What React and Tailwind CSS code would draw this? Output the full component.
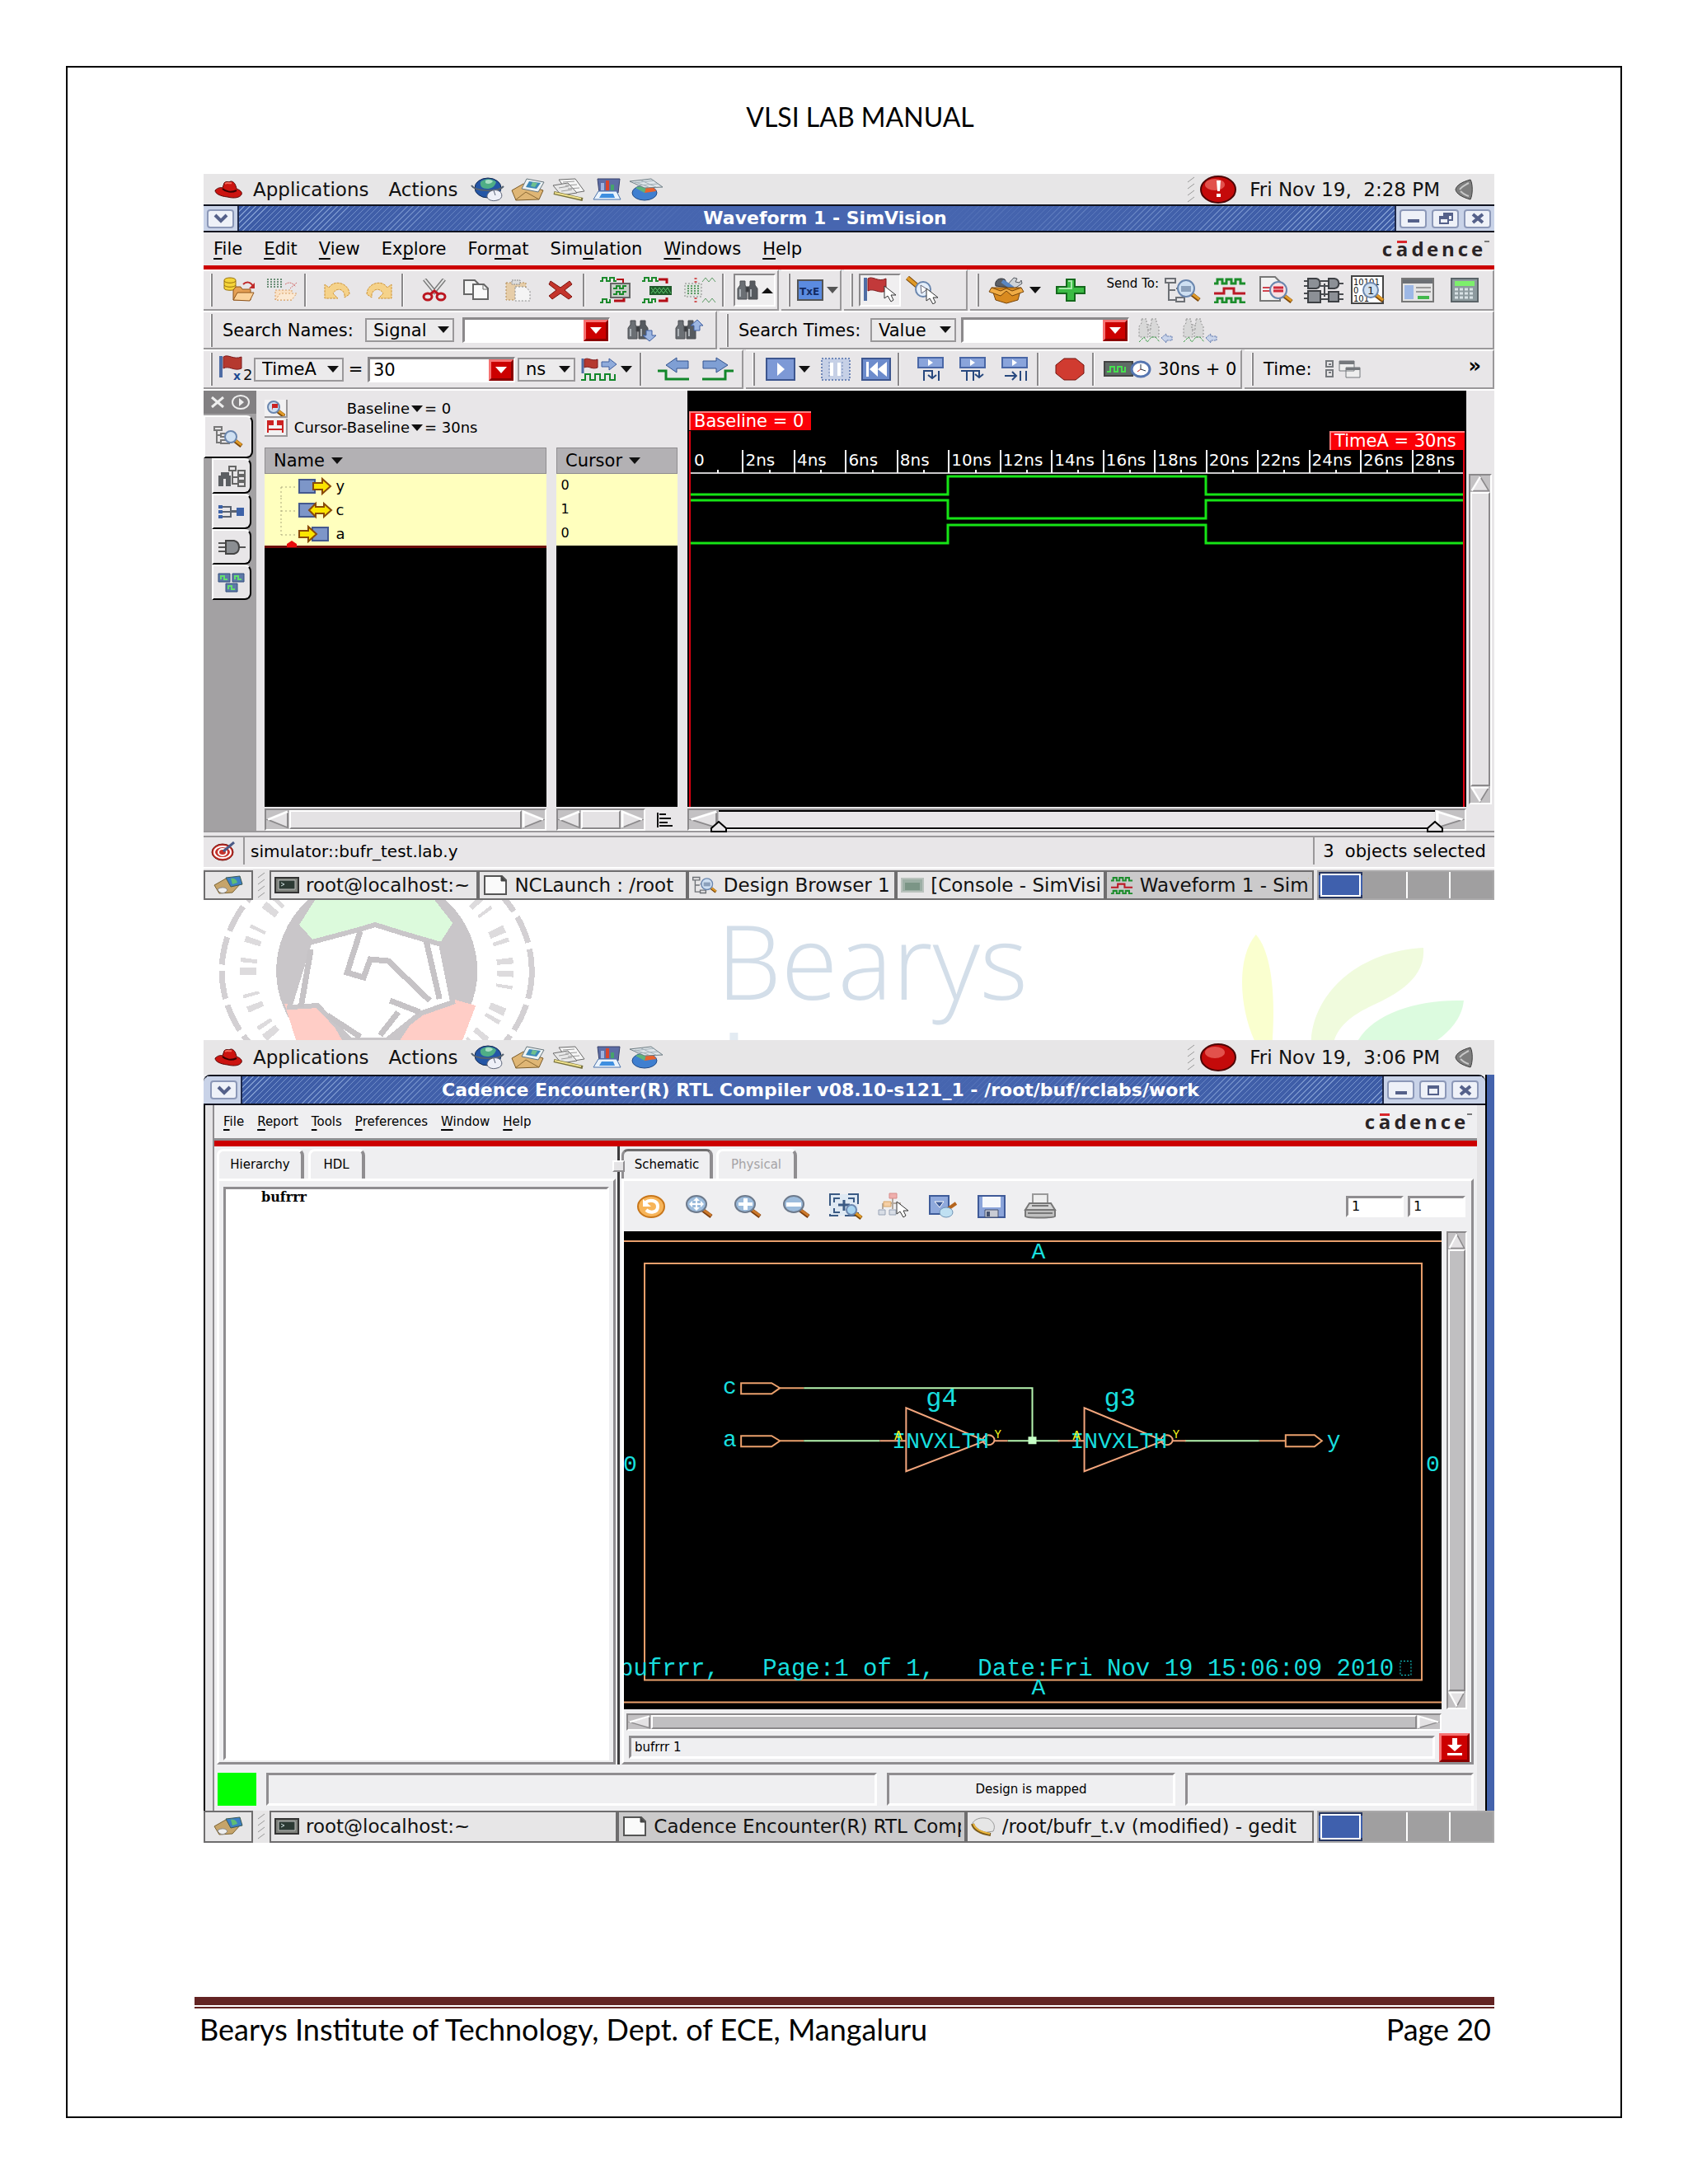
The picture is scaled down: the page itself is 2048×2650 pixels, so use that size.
import { useState } from 'react';

const SANS = "font-['DejaVu_Sans',sans-serif]";
const TITLE_BG =
  'bg-[linear-gradient(90deg,transparent,#4766b0_42%,#4766b0_58%,transparent),repeating-linear-gradient(135deg,#3d5ca6_0px,#3d5ca6_4px,#7f9bd0_4px,#7f9bd0_5px)]';

const MENUS = [
  ['File', 0], ['Edit', 0], ['View', 0], ['Explore', 2], ['Format', 3], ['Simulation', 3], ['Windows', 0], ['Help', 0],
];
const RC_MENUS = [
  ['File', 0], ['Report', 0], ['Tools', 0], ['Preferences', 0], ['Window', 0], ['Help', 0],
];
const TICKS = ['0', '2ns', '4ns', '6ns', '8ns', '10ns', '12ns', '14ns', '16ns', '18ns', '20ns', '22ns', '24ns', '26ns', '28ns'];
const SIGNALS = [
  { name: 'y', value: '0', dir: 'out' },
  { name: 'c', value: '1', dir: 'inout' },
  { name: 'a', value: '0', dir: 'in' },
];

function Icon({ w = 40, h = 32, children }) {
  return (
    <svg width={w} height={h} viewBox={`0 0 ${w} ${h}`} fill="none" className="shrink-0" aria-hidden="true">
      {children}
    </svg>
  );
}

/* ---------- desktop panel icons ---------- */

function HatIcon() {
  return (
    <Icon w={36} h={22}>
      <path d="M2 12c3-3 6-4 9-3l2-6c3-3 5 0 8-2 4 0 6 4 7 9 5 2 7 4 6 7-2 4-9 5-17 3C8 19 2 16 2 12z" fill="#cc1410" stroke="#5a0806" />
      <path d="M11 10c4 4 11 5 17 2" stroke="#3a0202" strokeWidth="2" />
      <path d="M14 4c3-2 5 0 8-1" stroke="#f46a5c" strokeWidth="2" />
    </Icon>
  );
}

function GlobeIcon() {
  return (
    <Icon w={42} h={30}>
      <ellipse cx="21" cy="13" rx="16" ry="12" fill="#2456a6" stroke="#13294f" />
      <path d="M12 6c5-5 14-5 19 0-2 6-6 8-11 8-6 0-9-3-8-8z" fill="#4fae86" />
      <path d="M18 4c3-2 7-1 9 1-2 3-6 4-9 2z" fill="#a9dfc4" />
      <path d="M1 10c4 7 32 9 39 1" stroke="#54616f" strokeWidth="2" />
      <path d="M20 22c2-6 10-8 15-5 5 4 3 10-3 11-6 2-13-1-12-6z" fill="#eef0f8" stroke="#5c6478" />
      <path d="M28 16l2 6" stroke="#5c6478" />
    </Icon>
  );
}

function MailIcon() {
  return (
    <Icon w={42} h={28}>
      <path d="M1 15l14-8 24 8-5 11-28 1z" fill="#dfb675" stroke="#7b5b28" />
      <path d="M19 1l21 4-7 12-20-4z" fill="#eef3f4" stroke="#66757c" />
      <path d="M22 4l14 2-5 7-13-2z" fill="#3b87b8" />
      <path d="M26 5l6 1-3 5-5-1z" fill="#6fc08d" />
      <path d="M5 27l13-10 16 9" stroke="#8a6a35" />
    </Icon>
  );
}

function PapersIcon() {
  return (
    <Icon w={42} h={28}>
      <path d="M9 2l20-1 11 15-19 3z" fill="#f6f6f6" stroke="#6b6b6b" />
      <path d="M2 9l18-3 11 12-19 3z" fill="#e8e8e8" stroke="#6b6b6b" />
      <path d="M14 5l14-1M17 9l14-1M20 13l14-1M9 12l12-2M12 16l13-2" stroke="#9a9a9a" />
      <path d="M3 18l35 8" stroke="#77713c" strokeWidth="4" />
      <path d="M4 18l32 7" stroke="#f0e28e" strokeWidth="2" />
    </Icon>
  );
}

function ChartIcon() {
  return (
    <Icon w={38} h={28}>
      <path d="M7 1h27l-2 17H9z" fill="#5d6da4" stroke="#36406b" />
      <path d="M11 15V6h4v9z" fill="#9fb4e0" />
      <path d="M17 15V3h4v12z" fill="#d8452e" />
      <path d="M23 15V8h4v7z" fill="#46a36c" />
      <path d="M8 16h22l5 10H2z" fill="#eaf3fc" stroke="#4a73ad" />
      <path d="M12 19h14l2 5H9z" fill="#3f8fe0" />
    </Icon>
  );
}

function PieIcon() {
  return (
    <Icon w={42} h={28}>
      <ellipse cx="19" cy="18" rx="15" ry="9" fill="#3f7fd0" stroke="#204a86" />
      <path d="M19 18l14-2c-1-4-6-6-12-6z" fill="#e8632e" />
      <path d="M19 18L8 12c3-2 8-2 13-2z" fill="#5fb37a" />
      <path d="M1 4l26-3 14 10-22 1z" fill="#dfe6ea" stroke="#6c7b82" />
      <path d="M8 5l16 6M15 3l18 8M5 6l26-3M10 9l26-2" stroke="#a2b0b8" />
    </Icon>
  );
}

function SpeakerIcon() {
  return (
    <Icon w={28} h={26}>
      <path d="M3 13c1-5 7-9 18-12 3 5 3 18 0 24C10 22 4 18 3 13z" fill="#7e7e7e" stroke="#3e3e3e" />
      <path d="M8 13c2-3 5-5 11-8M9 15c3 3 6 5 10 6" stroke="#c9c9c9" strokeWidth="2" />
    </Icon>
  );
}

function AlertIcon({ mark }) {
  return (
    <Icon w={44} h={34}>
      <ellipse cx="22" cy="17" rx="21" ry="16" fill="#c40a0a" stroke="#4c0505" strokeWidth="2" />
      <ellipse cx="18" cy="11" rx="12" ry="7" fill="#e2514c" />
      {mark && <path d="M20 6h5l-1 13h-3zM20 22h5v4h-5z" fill="#fff" />}
    </Icon>
  );
}

/* ---------- toolbar icons ---------- */

function Binoculars({ dim }) {
  const c = dim ? '#8e8e8e' : '#4b4d50';
  const dash = dim ? '2 2' : undefined;
  return (
    <g stroke={c} strokeDasharray={dash}>
      <path d="M4 2h6v5l2 4v13H1V11l3-4z" fill={dim ? '#d8d8d8' : '#6b6f74'} />
      <path d="M16 2h6v5l3 4v13H14V11l2-4z" fill={dim ? '#d8d8d8' : '#565a5f'} />
      <path d="M11 9h4v6h-4z" fill={dim ? '#d8d8d8' : '#3b3d40'} />
      {!dim && <path d="M4 12v9M17 12v9" stroke="#aeb3b8" strokeWidth="2" />}
    </g>
  );
}

function Lens({ x, y, r = 9, fill = '#cfe0f2' }) {
  return (
    <g>
      <path d={`M${x + r - 3} ${y + r - 3}l9 7`} stroke="#7a4608" strokeWidth="5" />
      <path d={`M${x + r - 2} ${y + r - 3}l8 6`} stroke="#e09a28" strokeWidth="3" />
      <circle cx={x} cy={y} r={r} fill={fill} stroke="#6a86ae" strokeWidth="2" />
    </g>
  );
}

function Pointer({ x, y }) {
  return <path d={`M${x} ${y}v15l4-3 4 7 3-2-3-6h6z`} fill="#fff" stroke="#333" />;
}

function Caret({ up, color = '#111' }) {
  return (
    <svg width="14" height="8" viewBox="0 0 14 8" className="shrink-0" aria-hidden="true">
      <path d={up ? 'M0 8l7-7 7 7z' : 'M0 0h14L7 8z'} fill={color} />
    </svg>
  );
}

const OpenDbIcon = () => (
  <Icon>
    <path d="M1 4c0-4 14-4 14 0v10c0 3-14 3-14 0z" fill="#f5d53a" stroke="#97700d" />
    <path d="M1 5c2 3 12 3 14 0M1 10c2 3 12 3 14 0" stroke="#97700d" />
    <path d="M12 16l3-4h6l2 3h10v13H12z" fill="#e5a055" stroke="#8f5318" />
    <path d="M12 28l5-9h20l-5 10z" fill="#fbd29a" stroke="#8f5318" />
    <path d="M24 9c4-4 9-3 12 2" stroke="#c02a2a" strokeWidth="2" />
    <path d="M38 7v7h-7z" fill="#c02a2a" />
  </Icon>
);

const ReloadDbIcon = () => (
  <Icon>
    <path d="M2 3h18M2 6h18M2 9h18M2 12h18" stroke="#6c8f78" strokeWidth="2" strokeDasharray="2 2" />
    <path d="M12 16h20v12H12z" fill="#fae1c5" stroke="#d79d62" strokeDasharray="2 2" />
    <path d="M12 28l6-8h20l-6 8z" fill="#fbe9d3" stroke="#d79d62" strokeDasharray="2 2" />
    <path d="M24 9c4-3 8-3 13 3M38 7l-8 7" stroke="#d26a6a" strokeDasharray="2 1" />
  </Icon>
);

const UndoIcon = ({ flip }) => (
  <Icon w={34} h={24}>
    <path
      d={flip ? 'M2 17C2 4 20 -2 27 9l5-4v17H16l6-6c-4-7-12-6-14 1v4z' : 'M32 17C32 4 14 -2 7 9L2 5v17h16l-6-6c4-7 12-6 14 1v4z'}
      fill="#f5d28a"
      stroke="#cf9434"
      strokeDasharray="3 1"
    />
  </Icon>
);

const CutIcon = () => (
  <Icon w={32} h={28}>
    <path d="M4 1l14 17M28 1L14 18" stroke="#777" strokeWidth="5" />
    <path d="M4 1l14 17M28 1L14 18" stroke="#e4e4e4" strokeWidth="2" />
    <ellipse cx="8" cy="22" rx="5" ry="4" stroke="#bb1620" strokeWidth="3" />
    <ellipse cx="24" cy="22" rx="5" ry="4" stroke="#bb1620" strokeWidth="3" />
    <path d="M11 19l5-4 5 4" stroke="#bb1620" strokeWidth="3" />
  </Icon>
);

const CopyIcon = () => (
  <Icon w={32} h={26}>
    <path d="M1 1h13l5 5v12H1z" fill="#f3f3f3" stroke="#666" strokeWidth="2" />
    <path d="M12 6h13l5 5v13H12z" fill="#fafafa" stroke="#666" strokeWidth="2" />
    <path d="M24 6v6h6" stroke="#666" />
  </Icon>
);

const PasteIcon = () => (
  <Icon w={32} h={28}>
    <path d="M1 5h24v21H1z" fill="#e6cda8" stroke="#b18c55" strokeDasharray="2 2" />
    <path d="M8 2h10v5H8z" fill="#ddd" stroke="#888" strokeDasharray="2 1" />
    <path d="M12 10h12l6 5v12H12z" fill="#f4f4f4" stroke="#888" strokeDasharray="2 2" />
  </Icon>
);

const DeleteIcon = () => (
  <Icon w={30} h={24}>
    <path d="M3 1l12 8L26 1l3 4-9 7 9 8-4 3-10-7-10 7-4-4 9-7-9-7z" fill="#c4352c" stroke="#7c120d" />
  </Icon>
);

const PULSE = 'M1 5h3V1h5v4h4V1h5v4h3';

const WaveInIcon = () => (
  <Icon>
    <path d={PULSE} stroke="#1d8a2d" strokeWidth="2" />
    <path d="M21 3h8v4" stroke="#b40d16" strokeWidth="2" />
    <path d="M14 8h23v17H14z" fill="#c9cfc9" stroke="#666" strokeWidth="2" />
    <path d="M17 14h4v-3h4v3h4v-3h4M17 21h4v-3h4v3h4v-3h4" stroke="#1d8a2d" strokeWidth="2" />
    <path d="M1 31h3v-4h5v4h4v-4" stroke="#1d8a2d" strokeWidth="2" />
    <path d="M18 29h12v-3" stroke="#b40d16" strokeWidth="3" />
  </Icon>
);

const BusInIcon = () => (
  <Icon>
    <path d={PULSE} stroke="#1d8a2d" strokeWidth="2" />
    <path d="M21 3h10v5" stroke="#b40d16" strokeWidth="3" />
    <path d="M10 11h27v11H10z" fill="#1f5a2a" />
    <path d="M12 13l5 7 5-7 5 7 5-7 4 7M12 20l5-7 5 7 5-7 5 7" stroke="#5ec46e" />
    <path d="M1 31h3v-4h5v4h4v-4h4v4" stroke="#1d8a2d" strokeWidth="2" />
    <path d="M21 29h10v-4" stroke="#b40d16" strokeWidth="3" />
  </Icon>
);

const WaveDimIcon = () => (
  <Icon>
    <path d="M2 8h20v16H2z" fill="#e0e4e0" stroke="#888" strokeDasharray="2 2" />
    <path d="M5 11h14M5 14h14M5 17h14M5 20h14" stroke="#5d9c66" strokeWidth="2" strokeDasharray="2 2" />
    <path d="M15 1v6M15 25v6" stroke="#cf5656" strokeWidth="3" strokeDasharray="2 2" />
    <path d="M23 6l4-5 4 5 4-5 4 5M23 31l4-5 4 5 4-5 4 5" stroke="#5d9c66" />
  </Icon>
);

const FlagCursorIcon = () => (
  <Icon w={42} h={36}>
    <path d="M3 3v28" stroke="#4f6da5" strokeWidth="4" />
    <path d="M6 4c6-4 12 5 22 0v15c-9 4-15-4-22 0z" fill="#c2393a" stroke="#7d1a1c" />
    <Pointer x={26} y={13} />
  </Icon>
);

const HandLensIcon = () => (
  <Icon w={40} h={34}>
    <path d="M2 2l13 11" stroke="#7a4608" strokeWidth="6" />
    <path d="M2 2l12 10" stroke="#e09a28" strokeWidth="4" />
    <circle cx="21" cy="16" r="9" fill="#e4eefa" stroke="#6a86ae" strokeWidth="2" />
    <path d="M18 11l8 5-7 5z" fill="#fff" stroke="#667" />
    <Pointer x={25} y={15} />
  </Icon>
);

const ToolboxIcon = () => (
  <Icon w={46} h={34}>
    <path d="M9 12C7 5 14 1 20 4l6 10z" fill="#5b5f66" stroke="#2f3238" />
    <path d="M22 12l9-10 4 1-2 4 5 1 2-3 1 4-9 6z" fill="#cfd3d8" stroke="#55595f" />
    <path d="M17 6l13 9" stroke="#5a86c2" strokeWidth="5" />
    <path d="M4 14h36l-4 15-14 4-13-4z" fill="#d98a1f" stroke="#77450a" />
    <path d="M4 14l-3 5 14 5 7-6 7 6 14-5-3-5-11 4-7-3-7 3z" fill="#f0ac45" stroke="#77450a" />
  </Icon>
);

const PlusIcon = () => (
  <Icon w={36} h={28}>
    <path d="M13 1h10v9h12v8H23v9H13v-9H1v-8h12z" fill="#3cbb45" stroke="#14691c" strokeWidth="2" />
    <path d="M15 3h4v9H4" stroke="#a3eaa6" strokeWidth="2" />
  </Icon>
);

const TreeLensIcon = ({ w = 44, h = 32 }) => (
  <svg width={w} height={h} viewBox="0 0 44 32" fill="none" className="shrink-0" aria-hidden="true">
    <path d="M1 2h12v5H1zM14 14h8M5 7v21h9M5 16h8M14 25h10v5H14z" stroke="#6d7075" strokeWidth="2" />
    <Lens x={26} y={14} r={10} />
    <path d="M20 11h12v7H20z" fill="#8ba0bb" />
  </svg>
);

const WavesIcon = ({ w = 40, h = 32 }) => (
  <svg width={w} height={h} viewBox="0 0 40 32" fill="none" className="shrink-0" aria-hidden="true">
    <path d="M1 8h4V3h6v5h5V3h6v5h5V3h6v5h6M1 31h4v-5h6v5h5v-5h6v5h5v-5h6v5h6" stroke="#1c8d2c" strokeWidth="3" />
    <path d="M1 20h12v-6h12v6h14" stroke="#bb1a26" strokeWidth="3" />
  </svg>
);

const DocLensIcon = () => (
  <Icon w={44} h={34}>
    <path d="M2 1h18l6 6v23H2z" fill="#f2f2f2" stroke="#777" strokeWidth="2" />
    <path d="M5 14h10M5 18h10" stroke="#d04550" strokeWidth="2" />
    <Lens x={24} y={17} r={10} fill="#f6dfe3" />
    <path d="M18 14h12M18 18h12" stroke="#cf2737" strokeWidth="3" />
  </Icon>
);

const SchemIcon = () => (
  <Icon w={48} h={34}>
    <path d="M0 6h5M0 12h5M20 6h10M20 12h10M42 9h6M0 21h5M0 27h5M20 22h10M20 28h10M42 22h6M42 28h6M25 9v16" stroke="#4a4d51" strokeWidth="2" />
    <path d="M5 3h10c6 1 6 11 0 12H5zM30 3h7c7 1 7 11 0 12h-7zM5 18h15v14H5zM30 19h12v12H30z" fill="#8c9096" stroke="#3d4044" strokeWidth="2" />
  </Icon>
);

const BitsIcon = () => (
  <Icon w={48} h={36}>
    <path d="M1 1h38v33H1z" fill="#fff" stroke="#444" strokeWidth="2" />
    <text x="3" y="12" fontSize="10" fill="#111">10101</text>
    <text x="3" y="22" fontSize="10" fill="#111">0</text>
    <text x="3" y="32" fontSize="10" fill="#111">101</text>
    <Lens x={24} y={18} r={9} />
    <text x="20" y="23" fontSize="13" fill="#222">1</text>
  </Icon>
);

const FormIcon = () => (
  <Icon w={40} h={30}>
    <path d="M1 1h38v28H1z" fill="#e4e4e4" stroke="#777" strokeWidth="2" />
    <path d="M2 2h36v5H2z" fill="#6c7075" />
    <path d="M4 9h11v17H4z" fill="#9db8e6" />
    <path d="M18 12h18M18 17h18" stroke="#999" strokeWidth="2" />
    <path d="M20 24h14" stroke="#42b84c" strokeWidth="4" />
  </Icon>
);

const CalcIcon = () => (
  <Icon w={34} h={30}>
    <path d="M1 1h32v28H1z" fill="#8d9a9e" stroke="#5b6468" strokeWidth="2" />
    <path d="M5 4h24v6H5z" fill="#7df06c" />
    <path d="M5 14h24M5 19h24M5 24h24" stroke="#d9e2e5" strokeWidth="3" strokeDasharray="4 2" />
  </Icon>
);

const FindIcon = ({ dir }) => (
  <Icon w={36} h={28}>
    <Binoculars />
    {dir === 'down' ? (
      <path d="M23 14h7v6h5l-8 7-8-7h4z" fill="#9db6e2" stroke="#3f5fa0" />
    ) : (
      <path d="M23 14h7V8h4l-7-7-8 7h4z" fill="#9db6e2" stroke="#3f5fa0" />
    )}
  </Icon>
);

const FindEdgeIcon = () => (
  <Icon w={44} h={32}>
    <Binoculars dim />
    <path d="M1 30l6-6 4 6 5-6h5l5 6" stroke="#3f9f4a" strokeDasharray="3 1" />
    <path d="M28 25l6-5v3h7v5h-7v3z" fill="#c9d4ea" stroke="#5b75ab" strokeDasharray="2 1" />
  </Icon>
);

const FlagX2Icon = () => (
  <Icon w={44} h={36}>
    <path d="M3 2v26" stroke="#4f6da5" strokeWidth="4" />
    <path d="M6 3c6-4 12 4 22 0v14c-9 4-15-4-22 0z" fill="#b5392f" stroke="#7d1a1c" />
    <text x="18" y="31" fontSize="14" fontWeight="bold" fill="#1d4a92">x</text>
    <text x="30" y="31" fontSize="18" fill="#111">2</text>
  </Icon>
);

const FlagRunIcon = () => (
  <Icon w={44} h={30}>
    <path d="M2 2v18" stroke="#4f6da5" strokeWidth="3" />
    <path d="M4 3c5-3 9 3 16 0v10c-7 3-11-3-16 0z" fill="#b5392f" stroke="#7d1a1c" />
    <path d="M25 6h9V2l9 7-9 7v-4h-9z" fill="#8fabdb" stroke="#3f5fa0" />
    <path d="M0 28h5v-7h6v7h6v-7h6v7h6v-7h6v7h6v-7" stroke="#12862a" strokeWidth="2" />
  </Icon>
);

const EdgeIcon = ({ flip }) => (
  <Icon w={40} h={30}>
    <path d={flip ? 'M2 5h16V1l14 9-14 9v-5H2z' : 'M38 5H24V1L11 10l13 9v-5h14z'} fill="#7f9fd4" stroke="#35558f" />
    <path d={flip ? 'M1 27h28V17h10' : 'M1 17h10v10h28'} stroke="#12862a" strokeWidth="3" />
  </Icon>
);

const PlayIcon = () => (
  <Icon w={36} h={28}>
    <path d="M1 1h34v26H1z" fill="#7d99d6" stroke="#3d568f" strokeWidth="2" />
    <path d="M14 6l9 8-9 8z" fill="#fff" />
  </Icon>
);

const PauseIcon = () => (
  <Icon w={36} h={28}>
    <path d="M1 1h34v26H1z" fill="#c6d0e6" stroke="#6f87b8" strokeWidth="2" strokeDasharray="2 2" />
    <path d="M13 6v16M22 6v16" stroke="#fff" strokeWidth="4" />
    <path d="M10 5v18M26 5v18" stroke="#6f87b8" strokeDasharray="2 2" />
  </Icon>
);

const RewindIcon = () => (
  <Icon w={36} h={28}>
    <path d="M1 1h34v26H1z" fill="#6d8ccc" stroke="#3d568f" strokeWidth="2" />
    <path d="M6 5h3v18H6zM20 5v18l-10-9zM31 5v18l-11-9z" fill="#fff" />
  </Icon>
);

const StepIcon = ({ kind }) => (
  <Icon w={32} h={30}>
    <path d="M1 1h30v12H1z" fill="#8aa4db" stroke="#4a67a6" strokeWidth="2" />
    <path d="M13 3l6 4-6 4z" fill="#fff" />
    {kind === 0 && <path d="M8 29V17h10v8M26 17v12M13 22l5 4 5-4" stroke="#27487e" strokeWidth="2" />}
    {kind === 1 && <path d="M2 17h22v8M9 17v12M17 17v12M19 21l5 4 5-4" stroke="#27487e" strokeWidth="2" />}
    {kind === 2 && <path d="M4 23h14M13 18l5 5-5 5M23 17v12M30 17v12" stroke="#27487e" strokeWidth="2" />}
  </Icon>
);

const StopIcon = () => (
  <Icon w={36} h={28}>
    <path d="M11 1h14l10 8v10l-10 8H11L1 19V9z" fill="#d03b30" stroke="#74150f" />
  </Icon>
);

const SimClockIcon = () => (
  <Icon w={58} h={22}>
    <path d="M1 2h34v17H1z" fill="#5f6a66" stroke="#444" strokeWidth="2" />
    <path d="M4 14h4V8h5v6h4V8h5v6h4V8" stroke="#46e04e" strokeWidth="2" />
    <ellipse cx="45" cy="11" rx="11" ry="9" fill="#fff" stroke="#5575b0" strokeWidth="3" />
    <path d="M45 5v6l6 2" stroke="#234" />
    <path d="M45 11l-4 3" stroke="#c22" />
  </Icon>
);

const LinkWinIcon = () => (
  <Icon w={44} h={22}>
    <path d="M2 1h8v7H2zM2 12h8v8H2zM5 5h3M5 15h3" stroke="#75787c" strokeWidth="2" />
    <path d="M18 1h18v12H18zM26 9h17v12H26z" fill="#eee" stroke="#75787c" />
    <path d="M18 1h18v4H18zM26 9h17v3H26z" fill="#75787c" />
  </Icon>
);

/* ---------- shared widgets ---------- */

function Slot({ label, className = 'w-[51px]', children }) {
  return (
    <button type="button" aria-label={label} className={`flex h-10 shrink-0 items-center justify-center gap-1 ${className}`}>
      {children}
    </button>
  );
}

function Grip() {
  return (
    <div className="flex h-full w-[18px] shrink-0 items-center justify-center">
      <div className="h-[40px] w-[3px] border-r-2 border-l border-r-[#8b898b] border-l-white" />
    </div>
  );
}

function Sep() {
  return (
    <div className="flex h-full w-4 shrink-0 items-center pl-[2px]">
      <div className="h-[40px] w-[3px] border-l-2 border-r border-l-[#8b898b] border-r-white" />
    </div>
  );
}

function Group({ className = '', children }) {
  return (
    <div className={`flex items-center border-r-2 border-b-2 border-t-2 border-r-[#9a989a] border-b-[#9a989a] border-t-white ${className}`}>
      {children}
    </div>
  );
}

function Drop({ label, value, className }) {
  return (
    <div className={`relative h-[29px] shrink-0 ${className}`}>
      <select
        aria-label={label}
        className="h-full w-full appearance-none border-2 border-[#9a989a] bg-[#ecebec] pl-2 text-[21px] leading-6 text-black"
      >
        <option>{value}</option>
      </select>
      <span className="pointer-events-none absolute top-[10px] right-[6px] flex">
        <Caret />
      </span>
    </div>
  );
}

function Combo({ label, initial = '', className }) {
  const [value, setValue] = useState(initial);
  return (
    <div className={`flex h-[31px] shrink-0 border-t-3 border-l-3 border-r-2 border-b-2 border-t-[#8b898b] border-l-[#8b898b] border-r-white border-b-white bg-white ${className}`}>
      <input
        aria-label={label}
        value={value}
        onChange={(e) => setValue(e.target.value)}
        className="h-full min-w-0 flex-1 bg-white px-1 text-[21px] leading-6"
      />
      <button type="button" aria-label="Show history" className="flex w-[30px] items-center justify-center border-3 border-t-[#f67272] border-l-[#f67272] border-r-[#8a0000] border-b-[#8a0000] bg-[#cc0000]">
        <Caret color="#fff" />
      </button>
    </div>
  );
}

function MenuItem({ text, mark }) {
  return (
    <button type="button">
      {text.slice(0, mark)}
      <span className="underline decoration-2 underline-offset-4">{text[mark]}</span>
      {text.slice(mark + 1)}
    </button>
  );
}

function CadenceLogo() {
  return (
    <svg width="132" height="36" viewBox="0 0 132 36" role="img" aria-label="cadence" className="shrink-0">
      <g fontFamily="Open Sans, sans-serif" fontWeight="700" fontSize="24" fill="#2a2426" textAnchor="middle">
        <text x="8" y="27">c</text>
        <text x="26" y="27">a</text>
        <text x="45" y="27">d</text>
        <text x="63" y="27">e</text>
        <text x="82" y="27">n</text>
        <text x="100" y="27">c</text>
        <text x="117" y="27">e</text>
      </g>
      <path d="M20 8h12v3H20z" fill="#d9262b" />
      <path d="M126 8h6v2h-6z" fill="#777" />
    </svg>
  );
}

function TopPanel({ time, alert, className }) {
  return (
    <div className={`flex items-center bg-[#e7e6e7] pr-[22px] pl-3 text-[23px] leading-7 text-[#111] ${className}`}>
      <HatIcon />
      <button type="button" className="ml-3">Applications</button>
      <button type="button" className="ml-6">Actions</button>
      <div className="ml-[15px] flex items-center gap-[7px]">
        <GlobeIcon />
        <MailIcon />
        <PapersIcon />
        <ChartIcon />
        <PieIcon />
      </div>
      <div className="ml-auto flex items-center">
        <PanelGrip />
        <span className="mr-4 ml-[6px] flex"><AlertIcon mark={alert} /></span>
        <span className="whitespace-pre">{time}</span>
        <span className="ml-4 flex"><SpeakerIcon /></span>
      </div>
    </div>
  );
}

function PanelGrip() {
  return (
    <Icon w={10} h={32}>
      <path d="M1 7l8-6M1 15l8-6M1 23l8-6M1 31l8-6" stroke="#999" />
    </Icon>
  );
}

function WindowButton({ label, children }) {
  return (
    <button type="button" aria-label={label} className="flex h-[23px] w-[33px] items-center justify-center rounded-sm border-2 border-[#8c98b8] bg-[#eef1f8]">
      <svg width="18" height="14" viewBox="0 0 18 14" fill="none" aria-hidden="true">{children}</svg>
    </button>
  );
}

function TitleBar({ title, restore, className }) {
  return (
    <div className={`flex border-y-2 border-[#10131f] ${className}`}>
      <div className="flex w-[43px] items-center justify-center border-r-2 border-[#1f2a4c] bg-[#c9d3e8]">
        <WindowButton label="Window menu">
          <path d="M2 3l7 7 7-7" stroke="#55618a" strokeWidth="4" />
        </WindowButton>
      </div>
      <div className={`flex flex-1 items-center justify-center overflow-hidden pl-5 whitespace-nowrap text-[22px] leading-7 font-bold text-white ${TITLE_BG}`}>
        {title}
      </div>
      <div className="flex w-[121px] items-center justify-center gap-[6px] border-l-2 border-[#1f2a4c] bg-[#c9d3e8]">
        <WindowButton label="Minimize"><path d="M2 8h14v4H2z" fill="#55618a" /></WindowButton>
        <WindowButton label="Maximize">
          {restore ? (
            <path d="M6 1h11v8h-4M2 5h10v8H2zM6 3h11M2 7h10" stroke="#55618a" strokeWidth="2" />
          ) : (
            <path d="M3 2h12v10H3zM3 4h12" stroke="#55618a" strokeWidth="2" />
          )}
        </WindowButton>
        <WindowButton label="Close"><path d="M3 2l12 10M15 2L3 12" stroke="#55618a" strokeWidth="4" /></WindowButton>
      </div>
    </div>
  );
}

function Arrow({ dir }) {
  const shapes = {
    left: 'M26 2v22L2 13z',
    right: 'M2 2v22l24-11z',
    up: 'M2 24h24L14 2z',
    down: 'M2 2h24L14 24z',
  };
  return (
    <svg viewBox="0 0 28 26" className="h-full w-full" preserveAspectRatio="none" aria-hidden="true">
      <path d={shapes[dir]} fill="#e4e2e4" stroke="#8b898b" strokeWidth="2" />
      <path d={dir === 'right' ? 'M2 24V2l24 11' : dir === 'down' ? 'M14 24L2 2h24' : dir === 'up' ? 'M2 24L14 2' : 'M2 13L26 2'} fill="none" stroke="#fff" strokeWidth="3" />
    </svg>
  );
}

function HScroll({ thumb = 'bg-[#e4e2e4]', className = '' }) {
  return (
    <div className={`flex border-2 border-t-[#8b898b] border-l-[#8b898b] border-r-white border-b-white bg-[#c3c1c3] ${className}`}>
      <button type="button" aria-label="Scroll left" className="w-7"><Arrow dir="left" /></button>
      <div className={`flex-1 border-2 border-t-white border-l-white border-r-[#8b898b] border-b-[#8b898b] ${thumb}`} />
      <button type="button" aria-label="Scroll right" className="w-7"><Arrow dir="right" /></button>
    </div>
  );
}

function VScroll({ thumb = 'bg-[#e4e2e4]', className = '' }) {
  return (
    <div className={`flex flex-col border-2 border-t-[#8b898b] border-l-[#8b898b] border-r-white border-b-white bg-[#c3c1c3] ${className}`}>
      <button type="button" aria-label="Scroll up" className="h-5"><Arrow dir="up" /></button>
      <div className={`flex-1 border-2 border-t-white border-l-white border-r-[#8b898b] border-b-[#8b898b] ${thumb}`} />
      <button type="button" aria-label="Scroll down" className="h-5"><Arrow dir="down" /></button>
    </div>
  );
}

/* ---------- taskbar ---------- */

const TerminalIcon = () => (
  <Icon w={30} h={20}>
    <path d="M1 1h28v18H1z" fill="#7d807a" stroke="#333" strokeWidth="2" />
    <path d="M5 4h20v11H5z" fill="#2c3a34" stroke="#bbb" />
    <path d="M8 7l4 2-4 2" stroke="#cdd" />
  </Icon>
);

const PageIcon = () => (
  <Icon w={30} h={24}>
    <path d="M2 1h21l5 5v17H2z" fill="#fafafa" stroke="#555" strokeWidth="2" />
    <path d="M22 1v6h6" fill="#444" stroke="#444" />
  </Icon>
);

const ConsoleIcon = () => (
  <Icon w={28} h={18}>
    <path d="M1 1h26v16H1z" fill="#9dafa5" stroke="#b9c2bd" strokeWidth="2" />
    <path d="M5 6h18v9H5z" fill="#7b9586" />
  </Icon>
);

const PencilIcon = () => (
  <Icon w={30} h={24}>
    <path d="M2 8C6 1 16 1 22 3c6 4 8 9 5 15L14 20C6 18 1 14 2 8z" fill="#e6e6e6" stroke="#999" />
    <path d="M2 9c2 7 8 11 22 13" stroke="#7a5a1c" strokeWidth="4" />
    <path d="M3 9c2 6 8 10 20 12" stroke="#f0b93a" strokeWidth="2" />
  </Icon>
);

const DesktopIcon = () => (
  <Icon w={38} h={24}>
    <path d="M2 12l14-8 18 6-10 11-16 1z" fill="#c6a46a" stroke="#7d6535" />
    <path d="M16 3l17-2 3 10-14 3z" fill="#3b7fc4" stroke="#3d5a50" />
    <path d="M22 4c4-1 7 1 8 5l-6 2z" fill="#5fbd74" />
    <path d="M6 17c4-3 10-3 12 1-3 5-10 5-12-1z" fill="#eee" stroke="#888" />
  </Icon>
);

const TASK_ICONS = {
  terminal: <TerminalIcon />,
  page: <PageIcon />,
  tree: <TreeLensIcon w={30} h={22} />,
  console: <ConsoleIcon />,
  wave: <WavesIcon w={28} h={22} />,
  pencil: <PencilIcon />,
};

function Taskbar({ tasks, className }) {
  return (
    <div className={`flex bg-[#e7e6e7] ${className}`}>
      <button type="button" aria-label="Show desktop" className="flex w-[60px] items-center justify-center border-2 border-[#6e6d6e]">
        <DesktopIcon />
      </button>
      <div className="flex w-[20px] items-center justify-center"><PanelGrip /></div>
      <div className="flex min-w-0 flex-1">
        {tasks.map((task) => (
          <button
            type="button"
            key={task.label}
            className={`flex min-w-0 flex-1 items-center gap-2 overflow-hidden border-2 border-[#6e6d6e] px-1 text-[23px] leading-7 whitespace-nowrap text-[#111] ${
              task.active ? 'bg-[#cbcacb]' : 'bg-[#e7e6e7]'
            }`}
          >
            {TASK_ICONS[task.icon]}
            <span className="overflow-hidden">{task.label}</span>
          </button>
        ))}
      </div>
      <div className="ml-1 grid w-[215px] grid-cols-4 border-2 border-[#a9a8a9] bg-[#a09fa0]">
        <div className="border-y-4 border-[#26355f] bg-[#3f60ad] outline-2 -outline-offset-4 outline-white" />
        <div />
        <div className="border-l-2 border-white" />
        <div className="border-l-2 border-white" />
      </div>
    </div>
  );
}

/* ---------- SimVision window ---------- */

function SimToolbars() {
  return (
    <div className="bg-[#e8e6e8]">
      <div className="flex h-[50px] gap-[3px]">
        <Group className="pr-[2px]">
          <Grip />
          <Slot label="Open database"><OpenDbIcon /></Slot>
          <Slot label="Reload database"><ReloadDbIcon /></Slot>
          <Sep />
          <Slot label="Undo"><UndoIcon /></Slot>
          <Slot label="Redo"><UndoIcon flip /></Slot>
          <Sep />
          <Slot label="Cut"><CutIcon /></Slot>
          <Slot label="Copy"><CopyIcon /></Slot>
          <Slot label="Paste"><PasteIcon /></Slot>
          <Slot label="Delete"><DeleteIcon /></Slot>
          <Sep />
          <Slot label="Add wave"><WaveInIcon /></Slot>
          <Slot label="Add bus"><BusInIcon /></Slot>
          <Slot label="Expand wave"><WaveDimIcon /></Slot>
          <Sep />
          <Slot label="Find" className="w-[51px] border-2 border-t-[#8b898b] border-l-[#8b898b] border-r-white border-b-white bg-[#f0eff0]">
            <Icon w={26} h={26}><Binoculars /></Icon>
            <Caret up />
          </Slot>
        </Group>
        <Group className="pr-[2px]">
          <Grip />
          <Slot label="Text editor">
            <Icon w={32} h={26}>
              <path d="M1 1h30v24H1z" fill="#5b8be0" stroke="#555" strokeWidth="2" />
              <text x="3" y="19" fontSize="12" fontWeight="bold" fill="#122a63">TxE</text>
            </Icon>
            <Caret color="#555" />
          </Slot>
        </Group>
        <Group className="pr-[28px]">
          <Grip />
          <Slot label="Select" className="w-[51px] border-2 border-t-[#8b898b] border-l-[#8b898b] border-r-white border-b-white bg-[#f0eff0]">
            <FlagCursorIcon />
          </Slot>
          <Slot label="Zoom"><HandLensIcon /></Slot>
        </Group>
        <Group className="flex-1">
          <Grip />
          <Slot label="Tools" className="w-[72px]"><ToolboxIcon /><Caret /></Slot>
          <Slot label="Add" className="w-[64px]"><PlusIcon /></Slot>
          <span className="w-[75px] shrink-0 pb-4 text-right text-[15px] leading-5 whitespace-nowrap text-black">Send To:</span>
          <Slot label="Design browser" className="w-[57px]"><TreeLensIcon /></Slot>
          <Slot label="Waveform" className="w-[57px]"><WavesIcon /></Slot>
          <Slot label="Source browser" className="w-[57px]"><DocLensIcon /></Slot>
          <Slot label="Schematic tracer" className="w-[57px]"><SchemIcon /></Slot>
          <Slot label="Memory viewer" className="w-[57px]"><BitsIcon /></Slot>
          <Slot label="Register" className="w-[57px]"><FormIcon /></Slot>
          <Slot label="Calculator" className="w-[57px]"><CalcIcon /></Slot>
        </Group>
      </div>

      <div className="flex h-[47px] gap-[3px] text-[21px] leading-6">
        <Group className="pr-[2px]">
          <Grip />
          <span className="w-[178px] shrink-0 pl-[5px] whitespace-nowrap">Search Names:</span>
          <Drop label="Search names by" value="Signal" className="w-[108px]" />
          <Combo label="Search names" className="mx-[10px] w-[179px]" />
          <Slot label="Find next" className="w-[58px]"><FindIcon dir="down" /></Slot>
          <Slot label="Find previous" className="w-[58px]"><FindIcon dir="up" /></Slot>
        </Group>
        <Group className="flex-1">
          <Grip />
          <span className="w-[165px] shrink-0 pl-[5px] whitespace-nowrap">Search Times:</span>
          <Drop label="Search times by" value="Value" className="w-[104px]" />
          <Combo label="Search times" className="mx-[6px] w-[204px]" />
          <Slot label="Previous edge" className="w-[54px]"><FindEdgeIcon /></Slot>
          <Slot label="Next edge" className="w-[54px]"><FindEdgeIcon /></Slot>
        </Group>
      </div>

      <div className="flex h-[48px] gap-[3px] text-[21px] leading-6">
        <Group className="pr-[2px]">
          <Grip />
          <Slot label="Cursor flag" className="w-[43px]"><FlagX2Icon /></Slot>
          <Drop label="Cursor" value="TimeA" className="w-[109px]" />
          <span className="w-[29px] text-center">=</span>
          <Combo label="Cursor time" initial="30" className="mr-[3px] w-[179px]" />
          <Drop label="Units" value="ns" className="w-[70px]" />
          <Slot label="Go to cursor" className="w-[76px]"><FlagRunIcon /><Caret /></Slot>
          <Sep />
          <Slot label="Previous edge" className="w-[54px]"><EdgeIcon /></Slot>
          <Slot label="Next edge" className="w-[54px]"><EdgeIcon flip /></Slot>
        </Group>
        <Group className="pr-1">
          <Grip />
          <Slot label="Run" className="w-[66px]"><PlayIcon /><Caret /></Slot>
          <Slot label="Pause" className="w-[49px]"><PauseIcon /></Slot>
          <Slot label="Restart" className="w-[49px]"><RewindIcon /></Slot>
          <Sep />
          <Slot label="Step"><StepIcon kind={0} /></Slot>
          <Slot label="Step over"><StepIcon kind={1} /></Slot>
          <Slot label="Step out"><StepIcon kind={2} /></Slot>
          <Sep />
          <Slot label="Stop"><StopIcon /></Slot>
          <Sep />
          <SimClockIcon />
          <span className="ml-2 w-[96px] whitespace-nowrap">30ns + 0</span>
        </Group>
        <Group className="flex-1">
          <Grip />
          <span className="mr-4 pl-[5px]">Time:</span>
          <LinkWinIcon />
          <button type="button" aria-label="More" className="mr-[14px] ml-auto pb-2 text-2xl leading-6 font-bold">»</button>
        </Group>
      </div>
    </div>
  );
}

function SideTab({ label, active, children }) {
  return (
    <button
      type="button"
      aria-label={label}
      className={`flex shrink-0 items-center justify-center rounded-r-lg border-2 border-t-white border-l-white border-r-black border-b-black bg-[#e8e6e8] ${
        active ? 'h-[52px] w-[60px]' : 'ml-[10px] h-[43px] w-[48px]'
      }`}
    >
      {children}
    </button>
  );
}

function SideTabs() {
  return (
    <div className="flex w-16 shrink-0 flex-col bg-[#a3a1a3]">
      <div className="mb-[2px] flex h-[28px] items-center justify-center gap-2 bg-[#828082]">
        <Icon w={18} h={14}><path d="M2 1l14 12M16 1L2 13" stroke="#eee" strokeWidth="3" /></Icon>
        <Icon w={22} h={18}>
          <ellipse cx="11" cy="9" rx="10" ry="8" stroke="#eee" strokeWidth="2" />
          <path d="M9 4l6 5-6 5z" fill="#eee" />
        </Icon>
      </div>
      <SideTab label="Design browser" active>
        <Icon w={36} h={26}>
          <path d="M1 1h9v4H1zM4 5v15h5M4 11h5M9 9h10v4H9zM9 17h10v4H9z" stroke="#777" strokeWidth="2" />
          <Lens x={21} y={13} r={7} />
        </Icon>
      </SideTab>
      <SideTab label="Find">
        <Icon w={34} h={26}>
          <path d="M1 12h6v13H1zM10 12h6v13h-6zM4 8h10v8H4z" fill="#5c5f63" />
          <path d="M14 1h8v5h-8zM25 6h8v5h-8zM25 13h8v5h-8zM25 20h8v5h-8zM18 6v16h6M18 14h6" stroke="#666" strokeWidth="2" />
        </Icon>
      </SideTab>
      <SideTab label="Signals">
        <Icon w={34} h={20}>
          <path d="M3 4h13v5h8M3 10h21M3 16h13v-5" stroke="#5b6370" strokeWidth="2" />
          <path d="M1 2h5v4H1zM1 8h5v4H1zM1 14h5v4H1zM23 5h9v10h-9z" fill="#3d62a8" />
        </Icon>
      </SideTab>
      <SideTab label="Schematic">
        <Icon w={34} h={20}>
          <path d="M1 5h10M1 10h10M1 15h10M26 10h8" stroke="#555" strokeWidth="2" />
          <path d="M10 2h10c8 2 8 14 0 16H10z" fill="#8b8e92" stroke="#444" strokeWidth="2" />
        </Icon>
      </SideTab>
      <SideTab label="Groups">
        <Icon w={34} h={24}>
          <path d="M1 1h14v10H1zM18 1h14v10H18zM10 13h14v10H10z" fill="#5e79a8" stroke="#35507f" />
          <path d="M4 8V4h4v4h4M21 8V4h4v4h4M13 20v-4h4v4h4" stroke="#63e06c" strokeWidth="2" />
        </Icon>
      </SideTab>
    </div>
  );
}

function SignalIcon({ dir, last }) {
  const arrows = {
    out: 'M29 8h11V3l10 9-10 9v-5H29z',
    inout: 'M24 12l8-8v4h10V4l9 8-9 8v-4H32v4z',
    in: 'M12 8h11V3l10 9-10 9v-5H12z',
  };
  return (
    <svg width="64" height="29" viewBox="0 0 64 29" fill="none" className="shrink-0" aria-hidden="true">
      <path d={last ? 'M1 0v16' : dir === 'out' ? 'M1 16v13' : 'M1 0v29'} stroke="#a9a77c" strokeDasharray="2 3" />
      <path d="M1 16h20" stroke="#a9a77c" strokeDasharray="2 3" />
      <g transform="translate(11 3)">
        <path d={dir === 'in' ? 'M28 4h19v16H28z' : 'M12 4h19v16H12z'} fill="#7d96c8" stroke="#44598f" strokeWidth="2" />
        <path d={arrows[dir]} fill="#fbe400" stroke="#8a4a08" strokeWidth="2" />
      </g>
    </svg>
  );
}

function SignalPanels() {
  return (
    <div className="flex w-[523px] shrink-0 flex-col pr-[12px] pl-[10px]">
      <div className="h-[69px] pt-[10px] text-[18px] leading-[23px]">
        <div className="flex items-center">
          <button type="button" aria-label="Zoom to baseline" className="flex h-[22px] w-[28px] shrink-0 items-center justify-center border-r-2 border-b-2 border-[#9a989a] bg-[#f2f1f2]">
            <Icon w={24} h={20}><Lens x={10} y={9} r={7} /><path d="M8 13V5h7v5H9" fill="#c22" /></Icon>
          </button>
          <span className="flex w-[148px] justify-end">Baseline</span>
          <span className="mx-[2px] flex"><Caret /></span>
          <span>= 0</span>
        </div>
        <div className="flex items-center">
          <button type="button" aria-label="Lock cursor" className="flex h-[22px] w-[28px] shrink-0 items-center justify-center border-r-2 border-b-2 border-[#9a989a] bg-[#f2f1f2]">
            <Icon w={24} h={18}><path d="M3 1v15M21 1v15M3 12h18" stroke="#c22" strokeWidth="2" /><path d="M3 1h7v6H3zM14 1h7v6h-7z" fill="#c22" /></Icon>
          </button>
          <span className="flex w-[148px] justify-end whitespace-nowrap">Cursor-Baseline</span>
          <span className="mx-[2px] flex"><Caret /></span>
          <span>= 30ns</span>
        </div>
      </div>
      <div className="flex flex-1 gap-3">
        <div className="flex w-[342px] flex-col">
          <div className="flex-1 bg-black">
            <table className="w-full border-collapse bg-[#ffffbe] text-lg leading-6">
              <thead>
                <tr className="h-[31px] border border-[#8f8d90] bg-[#b3b1b4]">
                  <th className="py-0 pl-[10px] text-left text-[21px] leading-6 font-normal">
                    <span className="flex items-center gap-2">Name <Caret /></span>
                  </th>
                </tr>
              </thead>
              <tbody>
                {SIGNALS.map((s, i) => (
                  <tr key={s.name} className="h-[29px]">
                    <td className="py-0 pl-[18px]">
                      <span className="flex items-center gap-1">
                        <SignalIcon dir={s.dir} last={i === 2} />
                        {s.name}
                      </span>
                    </td>
                  </tr>
                ))}
              </tbody>
            </table>
            <svg viewBox="0 0 342 3" preserveAspectRatio="none" className="block h-[3px] w-full overflow-visible" aria-hidden="true">
              <path d="M0 0h342v3H0z" fill="#6d0c0c" />
              <path d="M27 2v-4l6-4 6 4v4z" fill="#e80c0c" />
            </svg>
          </div>
          <HScroll className="mt-[2px] h-[27px]" />
        </div>
        <div className="flex w-[147px] flex-col">
          <div className="flex-1 bg-black">
            <table className="w-full border-collapse bg-[#ffffbe] text-base leading-5">
              <thead>
                <tr className="h-[31px] border border-[#8f8d90] bg-[#b3b1b4]">
                  <th className="py-0 pl-[10px] text-left text-[21px] leading-6 font-normal">
                    <span className="flex items-center gap-2">Cursor <Caret /></span>
                  </th>
                </tr>
              </thead>
              <tbody>
                {SIGNALS.map((s) => (
                  <tr key={s.name} className="h-[29px]">
                    <td className="py-0 pl-[5px]">{s.value}</td>
                  </tr>
                ))}
              </tbody>
            </table>
          </div>
          <div className="mt-[2px] flex h-[27px] items-center justify-between pr-1">
            <HScroll className="h-full w-[108px]" />
            <Icon w={22} h={18}>
              <path d="M2 0v18M4 2h8M4 7h14M4 12h10M4 16h16" stroke="#111" strokeWidth="2" />
            </Icon>
          </div>
        </div>
      </div>
    </div>
  );
}

function WavePlot() {
  return (
    <div className="flex min-w-0 flex-1">
      <div className="flex min-w-0 flex-1 flex-col">
        <div className="flex flex-1 flex-col bg-black px-[2px] text-xl leading-6 text-white">
          <div className="h-[25px]" />
          <div className="flex h-[24px] text-[21px] leading-5">
            <span className="h-[23px] w-[148px] border-t-2 border-l-2 border-[#ff8080] bg-[#fb0007] pl-1 whitespace-nowrap">Baseline = 0</span>
          </div>
          <div className="flex h-[23px] justify-end border-l-2 border-[#e00010] text-[21px] leading-5">
            <span className="w-[164px] border-t-2 border-l-2 border-[#ff8080] bg-[#fb0007] pl-1 whitespace-nowrap">TimeA = 30ns</span>
          </div>
          <div className="flex flex-1 flex-col border-x-2 border-[#e00010]">
            <div className="grid h-[29px] grid-cols-[repeat(15,minmax(0,1fr))] border-b-2 border-[#c9c7c9]">
              {TICKS.map((t) => (
                <div key={t} className="relative flex items-center border-l-2 border-white pl-[2px] first:border-transparent">
                  <span className="pb-1">{t}</span>
                  <span className="absolute bottom-0 left-1/2 h-[4px] w-[2px] bg-white" />
                </div>
              ))}
            </div>
            <svg viewBox="0 0 940 88" preserveAspectRatio="none" className="h-[88px] w-full" fill="none" stroke="#16e416" strokeWidth="3" aria-hidden="true">
              <path d="M0 25H313V3H627V25H940" />
              <path d="M0 32H313V54H627V32H940" />
              <path d="M0 84H313V62H627V84H940" />
            </svg>
          </div>
        </div>
        <div className="mt-[2px] flex h-[27px] border-2 border-t-[#8b898b] border-l-[#8b898b] border-r-white border-b-white bg-[#c3c1c3]">
          <button type="button" aria-label="Scroll left" className="w-9"><Arrow dir="left" /></button>
          <div className="relative flex-1 border-y-2 border-black bg-[#e8e6e8]">
            <span className="absolute top-[11px] -left-[10px] flex"><RangeHandle /></span>
            <span className="absolute top-[11px] -right-[10px] flex"><RangeHandle /></span>
          </div>
          <button type="button" aria-label="Scroll right" className="w-9"><Arrow dir="right" /></button>
        </div>
      </div>
      <div className="flex w-[34px] shrink-0 justify-center pt-[101px] pb-[32px]">
        <VScroll className="w-[28px]" />
      </div>
    </div>
  );
}

function RangeHandle() {
  return (
    <Icon w={20} h={14}>
      <path d="M1 13V9l9-8 9 8v4z" fill="#e8e6e8" stroke="#000" strokeWidth="2" />
    </Icon>
  );
}

function SimVision() {
  const tasks = [
    { label: 'root@localhost:~', icon: 'terminal' },
    { label: 'NCLaunch : /root', icon: 'page' },
    { label: 'Design Browser 1', icon: 'tree' },
    { label: '[Console - SimVision]', icon: 'console' },
    { label: 'Waveform 1 - SimVision', icon: 'wave', active: true },
  ];
  return (
    <section className={`bg-[#e8e6e8] text-black ${SANS}`}>
      <TopPanel time="Fri Nov 19,  2:28 PM" alert className="h-[37px]" />
      <TitleBar title="Waveform 1 - SimVision" restore className="h-[34px]" />
      <div className="flex h-10 items-center gap-[26px] pr-[6px] pl-3 text-[21px] leading-7">
        {MENUS.map(([text, mark]) => (
          <MenuItem key={text} text={text} mark={mark} />
        ))}
        <span className="ml-auto flex"><CadenceLogo /></span>
      </div>
      <div className="h-[5px] bg-[#cc0000]" />
      <SimToolbars />
      <div className="flex h-[538px] border-y-2 border-t-white border-b-[#9a989a]">
        <SideTabs />
        <SignalPanels />
        <WavePlot />
      </div>
      <div className="mt-1 flex h-[40px] border-y-2 border-t-[#9a989a] border-b-white pb-[3px] text-xl leading-6">
        <div className="flex w-[50px] items-center justify-center border-r-2 border-[#9a989a]">
          <Icon w={32} h={24}>
            <ellipse cx="15" cy="13" rx="13" ry="10" fill="#c5322b" stroke="#7a1510" />
            <ellipse cx="15" cy="13" rx="10" ry="7" stroke="#fff" strokeWidth="2" />
            <ellipse cx="15" cy="13" rx="5" ry="4" stroke="#fff" strokeWidth="2" />
            <path d="M16 12L29 1" stroke="#4a5a86" strokeWidth="3" />
          </Icon>
        </div>
        <div className="flex flex-1 items-center pl-[7px]">simulator::bufr_test.lab.y</div>
        <div className="flex w-[220px] items-center justify-center border-l-2 border-[#9a989a] text-[21px] whitespace-pre">3  objects selected</div>
      </div>
      <Taskbar tasks={tasks} className="mt-[2px] h-[36px]" />
    </section>
  );
}

/* ---------- faded college banner ---------- */

function Watermark() {
  return (
    <svg viewBox="0 0 1565 170" className="block w-full" fill="none" aria-hidden="true">
      <g shapeRendering="crispEdges">
        <ellipse cx="210" cy="86" rx="188" ry="154" stroke="#d3d0d3" strokeWidth="7" strokeDasharray="34 8" />
        <ellipse cx="210" cy="86" rx="156" ry="132" stroke="#dddbdd" strokeWidth="20" strokeDasharray="7 10 4 22 9 6 5 18" />
        <ellipse cx="210" cy="86" rx="140" ry="120" fill="#fff" />
        <ellipse cx="210" cy="86" rx="122" ry="118" fill="#c9c6c9" />
        <path d="M135 0h145l22 28-14 22-40-2-26-12-30 6-28 12-30-4-18-20z" fill="#dcfadc" />
        <path d="M98 126l36-2 20 22 14 24h-56z" fill="#ffcdc6" />
        <path d="M238 170l12-18 44-34 36 10-16 42z" fill="#ffcdc6" />
        <path d="M128 52l60-16 20-6 32 10 48 14 14 70-40 14-40 32h-44l-40-42-34 2z" fill="#fff" stroke="#c9c6c9" strokeWidth="6" />
        <path d="M190 38l-16 50 20 6 8-22 22 2 50 48M130 60l-12 70M270 50l16 70M150 140l40 26M226 122l36 14M236 136l-22 28" stroke="#c6c3c6" strokeWidth="7" />
      </g>
      <text x="622" y="121" fontFamily="Open Sans, sans-serif" fontWeight="300" fontSize="125" fill="#d3dee9">Bearys</text>
      <path d="M638 161h10v9h-10z" fill="#e3ebf2" />
      <path d="M1276 42c18 20 24 70 20 128h-22c-18-40-22-100 2-128z" fill="#faffcf" />
      <path d="M1343 170c4-60 60-108 136-112 4 40-40 60-66 72-20 10-36 22-42 40z" fill="#f0fbdd" />
      <path d="M1400 170c20-34 76-50 128-48-2 22-18 38-32 48z" fill="#dcfbdf" />
    </svg>
  );
}

/* ---------- RTL Compiler window ---------- */

const RefreshIcon = () => (
  <Icon w={36} h={30}>
    <ellipse cx="18" cy="15" rx="16" ry="13" fill="#f7b55a" stroke="#c8761a" strokeWidth="2" />
    <path d="M11 10c5-4 15-3 15 5s-10 8-14 4" stroke="#fff" strokeWidth="4" />
    <path d="M8 6v9h10z" fill="#fff" />
  </Icon>
);

const ZoomIcon = ({ kind }) => (
  <Icon w={36} h={30}>
    <path d="M20 18l12 9" stroke="#7a3c0c" strokeWidth="5" />
    <path d="M21 18l11 8" stroke="#cd7a2c" strokeWidth="3" />
    <ellipse cx="14" cy="12" rx="12" ry="10" fill="#9dbcdc" stroke="#6d7a8c" strokeWidth="2" />
    {kind === 'fit' && <path d="M14 4l4 4h-3v3h4V8l4 4-4 4v-3h-4v3h3l-4 4-4-4h3v-3H9v3l-4-4 4-4v3h4V8h-3z" fill="#fff" />}
    {kind === 'in' && <path d="M12 5h5v5h6v4h-6v5h-5v-5H6v-4h6z" fill="#fff" />}
    {kind === 'out' && <path d="M5 10h18v5H5z" fill="#fff" />}
  </Icon>
);

const RegionIcon = () => (
  <Icon w={42} h={34}>
    <path d="M2 2h34v26H2z" fill="#dfe9f3" stroke="#3a5a84" strokeWidth="2" strokeDasharray="12 10 24 10 20 8" />
    <path d="M7 12V7h7M31 12V7h-7M7 19v5h7" stroke="#3a5a84" strokeWidth="2" />
    <path d="M19 9v13M12 15h14" stroke="#3a5a84" strokeWidth="3" />
    <Lens x={28} y={21} r={6} fill="#a8d4f0" />
  </Icon>
);

const HierIcon = () => (
  <Icon w={40} h={34}>
    <path d="M18 7v6M8 13h20M6 20v-7M18 13v7" stroke="#b3a9a0" strokeWidth="2" />
    <path d="M14 1h9v6h-9z" fill="#efb0ae" stroke="#d98b88" />
    <path d="M7 11h9v6H7z" fill="#f5cfa5" stroke="#d7a566" />
    <path d="M1 21h8v6H1zM14 21h8v6h-8z" fill="#d8dde6" stroke="#98a3b5" />
    <Pointer x={23} y={11} />
  </Icon>
);

const ProbeIcon = () => (
  <Icon w={36} h={30}>
    <path d="M2 2h23v22H2z" fill="#8fa9dc" stroke="#3e5c9a" strokeWidth="2" />
    <path d="M8 9h11l-5 7z" fill="#3e5c9a" stroke="#fff" />
    <path d="M24 18l10-7" stroke="#b5651d" strokeWidth="4" />
    <ellipse cx="22" cy="22" rx="8" ry="6" fill="#bfe0f2" stroke="#6f93b5" />
  </Icon>
);

const SaveIcon = () => (
  <Icon w={34} h={28}>
    <path d="M1 1h32v26H1z" fill="#8ba4da" stroke="#3f5a98" strokeWidth="2" />
    <path d="M6 2h22v13H6z" fill="#f5f7fb" />
    <path d="M9 18h16v9H9z" fill="#c9ccd4" stroke="#44516e" />
    <path d="M11 20h4v6h-4z" fill="#44516e" />
  </Icon>
);

const PrintIcon = () => (
  <Icon w={40} h={32}>
    <path d="M11 1h18v13H11z" fill="#eee" stroke="#999" strokeWidth="2" />
    <path d="M7 12h26l5 8H2z" fill="#d4d4d4" stroke="#777" strokeWidth="2" />
    <path d="M2 20h36v8c0 2-36 2-36 0z" fill="#c0c0c0" stroke="#777" strokeWidth="2" />
    <path d="M10 15h20M5 24h30" stroke="#777" strokeWidth="2" />
  </Icon>
);

function Tab({ text, active, disabled, className = '' }) {
  return (
    <button
      type="button"
      disabled={disabled}
      className={`h-[36px] rounded-t-lg border-t-3 border-l-3 border-r-4 border-r-[#8f8d90] pb-[2px] ${
        active ? 'border-t-[#6e6d6e] border-l-[#8f8d90]' : 'border-t-white border-l-white'
      } ${disabled ? 'text-[#a5a3a6]' : 'text-black'} ${className}`}
    >
      {text}
    </button>
  );
}

function Gate({ x, name }) {
  return (
    <g>
      <g stroke="#f2a57c" strokeWidth="2" fill="none">
        <path d={`M${x - 32} 254H${x}`} />
        <path d={`M${x} 214v77l96-37z`} />
        <ellipse cx={x + 100} cy="253" rx="7" ry="6" />
        <path d={`M${x + 107} 254h16`} />
      </g>
      <text x={x - 17} y="263" fontSize="28" fill="#18dede">INVXLTH</text>
      <text x={x - 14} y="253" fontSize="16" fill="#f4f41c">A</text>
      <text x={x + 107} y="251" fontSize="14" fill="#f4f41c">Y</text>
      <text x={x + 24} y="212" fontSize="32" fill="#18dede">{name}</text>
    </g>
  );
}

function Schematic() {
  return (
    <svg viewBox="0 0 991 579" className="block w-full overflow-hidden bg-black" fontFamily="Liberation Mono, monospace" role="img" aria-label="Schematic of bufrrr">
      <g fill="none" stroke="#eaa06c" strokeWidth="2">
        <path d="M0 12h991M0 571h991M25 39h942v505H25z" />
        <path d="M142 184h37l10 6-10 7h-37zM142 248h37l10 6-10 7h-37zM802 247h35l9 7-9 7h-35z" />
        <path d="M189 190h29M189 254h29M770 254h32" />
      </g>
      <g fill="none" stroke="#b6f5b0" strokeWidth="2">
        <path d="M218 190h277v64M218 254h92M465 254h63M680 254h90" />
      </g>
      <Gate x={342} name="g4" />
      <Gate x={558} name="g3" />
      <path d="M490 249h10v9h-10z" fill="#c6ffc6" />
      <g fill="#18dede" fontSize="28">
        <text x="120" y="197">c</text>
        <text x="120" y="261">a</text>
        <text x="852" y="262">y</text>
        <text x="-1" y="291">0</text>
        <text x="972" y="291">0</text>
        <text x="494" y="33">A</text>
        <text x="494" y="561">A</text>
      </g>
      <text x="-6" y="538" fontSize="29" fill="#18dede" xmlSpace="preserve">bufrrr,   Page:1 of 1,   Date:Fri Nov 19 15:06:09 2010</text>
      <path d="M941 521h13v17h-13z" fill="none" stroke="#18dede" strokeDasharray="2 2" />
    </svg>
  );
}

const SUNKEN = 'border-3 border-t-[#8f8d90] border-l-[#8f8d90] border-r-white border-b-white';

function SmallField({ label }) {
  const [value, setValue] = useState('1');
  return (
    <input
      aria-label={label}
      value={value}
      onChange={(e) => setValue(e.target.value)}
      className={`h-[26px] w-[70px] bg-white px-1 text-base leading-5 ${SUNKEN}`}
    />
  );
}

function RtlCompiler() {
  const tasks = [
    { label: 'root@localhost:~', icon: 'terminal' },
    { label: 'Cadence Encounter(R) RTL Compiler', icon: 'page', active: true },
    { label: '/root/bufr_t.v (modified) - gedit', icon: 'pencil' },
  ];
  return (
    <section className={`bg-[#4463ac] text-black ${SANS}`}>
      <TopPanel time="Fri Nov 19,  3:06 PM" className="h-[42px]" />
      <div className="mr-[9px] border-r-2 border-black bg-[#efeff1]">
        <TitleBar title="Cadence Encounter(R) RTL Compiler v08.10-s121_1 - /root/buf/rclabs/work" className="h-[37px] rounded-t-lg bg-[#c9d3e8] px-1" />
        <div className="border-l-2 border-black bg-[#e4e3e5] pr-[10px] pl-[9px]">
          <div className="border-l-2 border-[#8f8d90] bg-[#efeff1]">
            <div className="flex h-[43px] items-center gap-[16px] border-b-3 border-[#8f8d90] pr-[6px] pl-[11px] text-[15px] leading-5">
              {RC_MENUS.map(([text, mark]) => (
                <MenuItem key={text} text={text} mark={mark} />
              ))}
              <span className="ml-auto flex"><CadenceLogo /></span>
            </div>
            <div className="h-[7px] bg-[#cc0000]" />

            <div className="flex pr-1 pl-[3px]">
              <div className="flex w-[484px] shrink-0 flex-col pt-[3px] text-[15px] leading-5">
                <div className="flex gap-[5px]">
                  <Tab text="Hierarchy" className="w-[106px]" />
                  <Tab text="HDL" className="w-[69px]" />
                </div>
                <div className="flex flex-1 border-3 border-t-white border-l-white border-r-[#8f8d90] border-b-[#8f8d90] px-[5px] pt-[7px] pb-[2px]">
                  <ul className={`flex-1 bg-white pl-[43px] font-['DejaVu_Serif',serif] text-base leading-5 font-bold ${SUNKEN}`}>
                    <li>bufrrr</li>
                  </ul>
                </div>
              </div>
              <div className="relative w-[7px] shrink-0">
                <div className="mx-auto h-full w-[3px] bg-[#3c3b3d]" />
                <div className="absolute top-[17px] -left-[4px] h-[14px] w-[15px] border-2 border-t-white border-l-white border-r-[#8f8d90] border-b-[#8f8d90] bg-[#e4e3e5]" />
              </div>
              <div className="flex min-w-0 flex-1 flex-col pt-[3px] text-[15px] leading-5">
                <div className="flex gap-1">
                  <Tab text="Schematic" active className="w-[111px]" />
                  <Tab text="Physical" disabled className="w-[98px]" />
                </div>
                <div className="border-3 border-t-white border-l-white border-r-[#8f8d90] border-b-[#8f8d90]">
                  <div className="flex h-[61px] items-center pr-[7px] pl-[3px]">
                    <Slot label="Refresh" className="w-[59px]"><RefreshIcon /></Slot>
                    <Slot label="Zoom fit" className="w-[59px]"><ZoomIcon kind="fit" /></Slot>
                    <Slot label="Zoom in" className="w-[59px]"><ZoomIcon kind="in" /></Slot>
                    <Slot label="Zoom out" className="w-[59px]"><ZoomIcon kind="out" /></Slot>
                    <Slot label="Zoom region" className="w-[59px]"><RegionIcon /></Slot>
                    <Slot label="Hierarchy" className="w-[59px]"><HierIcon /></Slot>
                    <Slot label="Probe" className="w-[59px]"><ProbeIcon /></Slot>
                    <Slot label="Save" className="w-[59px]"><SaveIcon /></Slot>
                    <Slot label="Print" className="w-[59px]"><PrintIcon /></Slot>
                    <div className="ml-auto flex gap-[5px]">
                      <SmallField label="Page" />
                      <SmallField label="Sheet" />
                    </div>
                  </div>
                  <div className="flex gap-[6px] pr-[5px]">
                    <div className="min-w-0 flex-1"><Schematic /></div>
                    <VScroll thumb="bg-[#c0bfc1]" className="w-[25px]" />
                  </div>
                  <HScroll thumb="bg-[#c0bfc1]" className="mt-[5px] mr-[36px] ml-[3px] h-[21px]" />
                  <div className="mt-[3px] flex items-center gap-[5px] pr-[2px] pl-[6px]">
                    <div className={`flex h-[28px] flex-1 items-center pl-1 ${SUNKEN}`}>bufrrr 1</div>
                    <button type="button" aria-label="Go" className="flex h-[35px] w-[37px] items-center justify-center border-3 border-t-[#f67272] border-l-[#f67272] border-r-[#8a0000] border-b-[#8a0000] bg-[#cc0000]">
                      <svg width="20" height="22" viewBox="0 0 20 22" aria-hidden="true">
                        <path d="M7 0h6v8h6l-9 8-9-8h6zM1 18h18v3H1z" fill="#fff" />
                      </svg>
                    </button>
                  </div>
                </div>
              </div>
            </div>

            <div className="flex h-[56px] items-center gap-[12px] px-1 pt-1 text-[15px] leading-5">
              <div className="h-[40px] w-[47px] bg-[#00ff00]" />
              <div className={`h-[40px] flex-1 ${SUNKEN}`} />
              <div className={`flex h-[40px] w-[350px] items-center justify-center ${SUNKEN}`}>Design is mapped</div>
              <div className={`h-[40px] w-[350px] ${SUNKEN}`} />
            </div>
          </div>
        </div>
      </div>
      <Taskbar tasks={tasks} className="h-[39px]" />
    </section>
  );
}

export default function App() {
  return (
    <div className="bg-white p-20 text-black">
      <main className="border-2 border-black pr-[153px] pb-[81px] pl-[154px]">
        <header className="h-[129px] pt-10 pl-[38px] text-center font-['Lato',sans-serif] text-[32px] leading-10">
          VLSI LAB MANUAL
        </header>
        <div className="pl-[11px]">
          <SimVision />
          <Watermark />
          <RtlCompiler />
        </div>
        <footer className="mt-[187px] font-['Lato',sans-serif] text-[36px] leading-[50px]">
          <div className="h-[14px] border-t-10 border-b-2 border-[#632423]" />
          <div className="flex justify-between pr-1 pl-[6px]">
            <span>Bearys Institute of Technology, Dept. of ECE, Mangaluru</span>
            <span>Page 20</span>
          </div>
        </footer>
      </main>
    </div>
  );
}
